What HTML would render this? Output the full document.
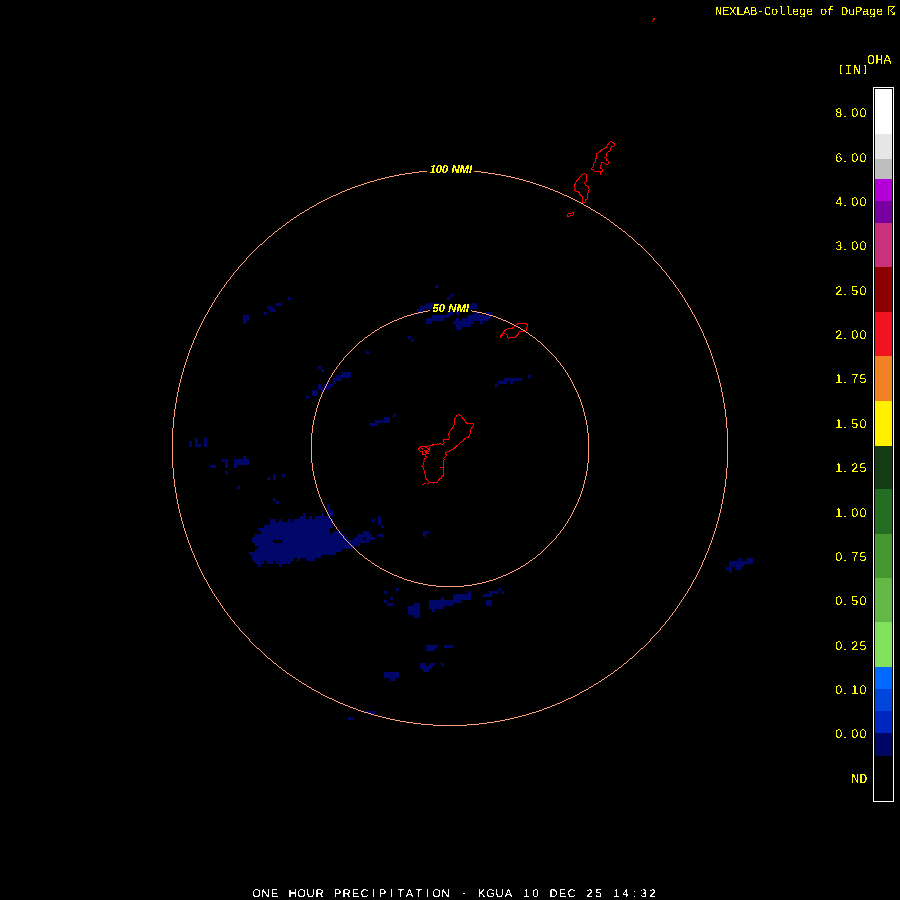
<!DOCTYPE html>
<html><head><meta charset="utf-8"><title>One Hour Precipitation - KGUA</title>
<style>
html,body{margin:0;padding:0;background:#000;}
body{width:900px;height:900px;overflow:hidden;}
svg{display:block}
text{font-family:"Liberation Mono","DejaVu Sans Mono",monospace;text-rendering:geometricPrecision;}
.y{fill:#ffff00;font-size:13.6px;stroke:#ffff00;stroke-width:0.1px;}
.n{font-family:"Liberation Sans","DejaVu Sans",sans-serif;font-size:12.6px;}
.ns{font-family:"Liberation Sans","DejaVu Sans",sans-serif;font-size:11.7px;}
.b{font-family:"Liberation Sans","DejaVu Sans",sans-serif;font-size:11.2px;}
.m{font-family:"Liberation Mono","DejaVu Sans Mono",monospace;font-size:12.1px;}
.ring{font-family:"Liberation Sans","DejaVu Sans",sans-serif;font-weight:bold;font-style:italic;font-size:11.3px;fill:#ffff00;}
</style></head><body>
<svg width="900" height="900" viewBox="0 0 900 900">
<defs><filter id="px" x="0" y="0" width="100%" height="100%" filterUnits="userSpaceOnUse" color-interpolation-filters="sRGB"><feComponentTransfer><feFuncA type="discrete" tableValues="0 0 0 0 0 0 0 0 0 0 0 0 1 1 1 1 1 1 1 1"/></feComponentTransfer></filter><filter id="px3" x="0" y="0" width="100%" height="100%" filterUnits="userSpaceOnUse" color-interpolation-filters="sRGB"><feComponentTransfer><feFuncA type="discrete" tableValues="0 0 0 0 0 0 0 0 0 1 1 1 1 1 1 1 1 1 1 1"/></feComponentTransfer></filter><filter id="px2" x="0" y="0" width="100%" height="100%" filterUnits="userSpaceOnUse" color-interpolation-filters="sRGB"><feComponentTransfer><feFuncA type="discrete" tableValues="0 0 0 0 0 0 0 0 0 0 0 1 1 1 1 1 1 1 1 1"/></feComponentTransfer></filter></defs>
<rect width="900" height="900" fill="#000"/>
<path d="M435 285h3v3h-3zM450 294h3v3h-3zM288 297h3v3h-3zM447 297h3v3h-3zM276 303h6v3h-6zM426 303h15v3h-15zM471 303h6v3h-6zM267 306h6v3h-6zM420 306h12v3h-12zM468 306h9v3h-9zM270 309h6v3h-6zM417 309h6v3h-6zM264 312h3v3h-3zM417 312h3v3h-3zM447 312h6v3h-6zM456 312h3v3h-3zM474 312h6v3h-6zM486 312h6v3h-6zM243 315h6v3h-6zM432 315h18v3h-18zM468 315h24v3h-24zM243 318h6v3h-6zM426 318h18v3h-18zM456 318h3v3h-3zM462 318h27v3h-27zM243 321h3v3h-3zM426 321h6v3h-6zM453 321h21v3h-21zM480 321h3v3h-3zM456 324h15v3h-15zM456 327h6v3h-6zM408 336h3v3h-3zM411 339h3v3h-3zM366 351h3v3h-3zM318 366h3v3h-3zM321 369h3v3h-3zM342 372h9v3h-9zM336 375h15v3h-15zM528 375h3v3h-3zM333 378h9v3h-9zM504 378h18v3h-18zM327 381h3v3h-3zM333 381h3v3h-3zM498 381h9v3h-9zM510 381h3v3h-3zM318 384h3v3h-3zM324 384h9v3h-9zM495 384h3v3h-3zM318 387h12v3h-12zM312 390h6v3h-6zM321 390h3v3h-3zM312 393h6v3h-6zM306 396h3v3h-3zM393 414h3v3h-3zM384 417h6v3h-6zM375 420h15v3h-15zM369 423h9v3h-9zM195 438h3v3h-3zM204 438h3v3h-3zM189 441h3v3h-3zM195 441h3v3h-3zM204 441h3v3h-3zM189 444h3v3h-3zM195 444h6v3h-6zM204 444h3v3h-3zM243 456h3v3h-3zM222 459h6v3h-6zM234 459h15v3h-15zM225 462h3v3h-3zM234 462h15v3h-15zM210 465h6v3h-6zM225 465h3v3h-3zM234 465h3v3h-3zM225 471h3v3h-3zM273 474h3v3h-3zM282 474h3v3h-3zM267 477h3v3h-3zM273 477h3v3h-3zM237 486h3v3h-3zM273 498h3v3h-3zM276 501h3v3h-3zM327 504h3v3h-3zM327 507h3v3h-3zM327 510h6v3h-6zM303 513h3v3h-3zM321 513h3v3h-3zM327 513h6v3h-6zM300 516h6v3h-6zM309 516h3v3h-3zM315 516h15v3h-15zM378 516h3v3h-3zM270 519h6v3h-6zM279 519h3v3h-3zM288 519h3v3h-3zM294 519h39v3h-39zM372 519h3v3h-3zM378 519h3v3h-3zM270 522h63v3h-63zM378 522h3v3h-3zM264 525h69v3h-69zM381 525h3v3h-3zM258 528h72v3h-72zM261 531h69v3h-69zM333 531h9v3h-9zM363 531h6v3h-6zM423 531h6v3h-6zM255 534h90v3h-90zM357 534h15v3h-15zM378 534h6v3h-6zM423 534h3v3h-3zM252 537h96v3h-96zM354 537h9v3h-9zM366 537h9v3h-9zM252 540h21v3h-21zM282 540h87v3h-87zM255 543h105v3h-105zM258 546h96v3h-96zM255 549h87v3h-87zM249 552h87v3h-87zM252 555h69v3h-69zM252 558h42v3h-42zM297 558h3v3h-3zM306 558h9v3h-9zM738 558h3v3h-3zM747 558h6v3h-6zM255 561h9v3h-9zM267 561h6v3h-6zM276 561h15v3h-15zM729 561h24v3h-24zM258 564h3v3h-3zM279 564h3v3h-3zM729 564h15v3h-15zM726 567h6v3h-6zM735 567h6v3h-6zM729 570h3v3h-3zM396 588h3v3h-3zM498 588h3v3h-3zM384 591h3v3h-3zM468 591h3v3h-3zM489 591h9v3h-9zM501 591h3v3h-3zM453 594h18v3h-18zM483 594h9v3h-9zM390 597h3v3h-3zM441 597h3v3h-3zM453 597h18v3h-18zM384 600h3v3h-3zM429 600h33v3h-33zM486 600h6v3h-6zM387 603h6v3h-6zM414 603h6v3h-6zM429 603h24v3h-24zM486 603h6v3h-6zM408 606h12v3h-12zM429 606h15v3h-15zM408 609h12v3h-12zM432 609h3v3h-3zM408 612h12v3h-12zM414 615h6v3h-6zM426 645h12v3h-12zM444 645h9v3h-9zM426 648h9v3h-9zM420 663h6v3h-6zM429 663h6v3h-6zM441 663h3v3h-3zM420 666h12v3h-12zM423 669h6v3h-6zM384 672h15v3h-15zM384 675h15v3h-15zM390 678h6v3h-6zM366 711h9v3h-9zM348 717h6v3h-6z" fill="#000768" shape-rendering="crispEdges"/>
<path d="M418.2 449.4L421.1 446.3L428.7 446.3L429.6 445.4L432.2 445.4L433.1 444.4L436.7 444.4L437.6 443.4L438.4 444.4L440.2 443.4L441.1 444.4L442.9 444.4L444.7 442.5L443.3 441.4L443.3 439.3L448.5 439.3L449.4 437.1L448.5 434.9L449.4 432.4L450.4 430.5L452.6 428.0L453.6 425.1L454.6 424.6L454.6 419.2L455.6 417.3L456.8 415.6L458.7 414.4L460.4 415.6L462.4 417.3L462.7 418.5L464.4 419.7L465.6 422.2L467.3 423.5L473.7 423.5L473.7 425.4L472.4 427.1L470.5 429.3L470.5 433.4L469.3 435.4L468.3 437.3L464.4 438.6L463.4 440.8L460.4 442.5L458.5 444.4L455.6 446.9L453.1 449.3L450.2 450.5L449.2 451.5L446.0 452.3L445.3 453.7L446.4 454.6L445.6 456.8L443.3 458.6L444.4 459.4L443.5 460.3L443.5 474.9L441.6 476.7L441.6 478.4L439.6 478.7L438.4 480.2L437.6 481.6L437.6 482.4L430.2 482.4L428.4 481.6L427.3 479.8L425.6 478.4L425.6 474.4L424.4 473.1L424.4 470.2L423.5 469.3L423.5 467.6L422.0 466.4L423.5 464.7L423.3 462.6L424.4 461.4L423.3 460.6L425.1 458.6L426.7 457.4L425.6 456.3L425.1 454.6L423.3 454.6L422.4 453.7L422.4 451.7L420.4 451.7ZM421.5 447.8L423.5 450.5M425.0 447.0L428.0 448.5L429.5 450.5L429.5 446.5M427.3 450.2L428.6 451.5L427.3 452.8L426.0 451.5L427.3 450.2M424.5 450.0L426.0 453.0L428.0 453.8L429.3 452.5M440.0 467.5L443.5 467.5M433.6 482.4L433.6 483.8M422.0 484.6L423.8 484.6M424.2 483.6L425.8 483.6M427.1 483.6L429.1 483.6M500.4 337.6L500.4 335.6L501.4 334.4L503.4 333.2L503.4 332.0L505.4 330.0L507.4 328.5L511.4 328.5L513.6 327.4L514.6 326.4L516.4 324.4L519.2 323.4L524.8 323.4L527.6 324.4L527.6 326.4L526.6 327.4L526.6 330.4L525.6 331.4L519.4 331.4L518.4 332.4L518.4 334.4L516.4 335.6L515.6 337.4L509.8 337.4L508.8 338.4L507.6 337.4L507.6 335.4L506.4 334.4L505.4 333.4L503.4 333.2L502.0 335.6L500.4 337.6ZM610.9 141.3L612.9 142.4L613.9 143.3L614.9 145.0L613.9 146.4L611.7 146.5L610.7 148.5L610.7 150.4L608.7 151.6L607.5 152.4L606.5 153.8L606.5 156.5L605.3 157.5L606.5 158.2L606.5 160.0L608.5 161.2L608.5 163.4L607.0 164.6L605.3 164.6L603.8 162.7L601.6 162.7L601.4 164.9L600.4 165.8L600.4 168.0L602.4 169.3L602.4 171.2L601.2 172.4L600.4 174.6L600.2 171.7L594.3 171.5L593.3 169.7L591.1 169.5L592.4 167.3L593.3 166.6L593.3 163.4L595.3 161.7L595.3 159.0L596.5 158.2L596.5 153.6L598.0 152.9L600.2 151.2L601.9 149.4L604.1 148.5L606.3 147.2L607.8 144.6L609.7 142.4ZM584.5 173.5L586.3 174.9L586.5 180.9L584.5 182.4L585.4 185.4L588.1 186.6L588.7 188.7L589.6 189.5L588.4 191.1L588.4 192.6L587.5 193.5L587.5 198.6L585.7 199.5L585.1 202.2L583.0 202.7L582.4 202.8L582.7 197.4L581.2 195.9L580.0 194.7L579.4 192.9L577.9 191.4L575.5 191.4L574.3 190.5L575.5 189.0L574.3 186.0L575.5 183.6L576.4 181.2L578.5 178.8L580.3 177.0L581.8 174.9L583.6 173.5ZM567.4 214.5L569.2 213.6L571.9 213.3L572.8 212.3L573.9 212.7L573.7 214.8L572.2 215.7L569.8 216.0L569.2 216.6L567.4 216.6Z" fill="none" stroke="#ff0000" stroke-width="1" shape-rendering="crispEdges"/>
<path d="M653 18h2v2h-2zM653 20h1v1h-1zM652 21h1v1h-1z" fill="#ff0000" shape-rendering="crispEdges"/>
<path d="M323 200h2v1h-2zM575 200h2v1h-2zM329 698h3v1h-3zM568 698h3v1h-3zM321 694h2v1h-2zM577 694h2v1h-2zM433 725h34v1h-34zM323 695h2v1h-2zM575 695h2v1h-2zM287 673h2v1h-2zM611 673h2v1h-2zM307 686h2v1h-2zM591 686h2v1h-2zM353 708h3v1h-3zM544 708h3v1h-3zM358 710h3v1h-3zM539 710h3v1h-3zM368 713h3v1h-3zM529 713h3v1h-3zM275 231h2v1h-2zM623 231h2v1h-2zM389 176h5v1h-5zM506 176h5v1h-5zM378 716h4v1h-4zM518 716h4v1h-4zM413 723h8v1h-8zM479 723h8v1h-8zM327 198h2v1h-2zM571 198h2v1h-2zM283 670h2v1h-2zM615 670h2v1h-2zM421 724h12v1h-12zM467 724h12v1h-12zM307 209h2v1h-2zM591 209h2v1h-2zM299 681h2v1h-2zM599 681h2v1h-2zM364 183h3v1h-3zM533 183h3v1h-3zM364 712h4v1h-4zM532 712h4v1h-4zM400 721h6v1h-6zM494 721h6v1h-6zM345 190h2v1h-2zM553 190h2v1h-2zM291 219h2v1h-2zM607 219h2v1h-2zM395 720h5v1h-5zM500 720h5v1h-5zM316 691h2v1h-2zM582 691h2v1h-2zM390 719h5v1h-5zM505 719h5v1h-5zM412 172h7v1h-7zM481 172h7v1h-7zM399 174h6v1h-6zM495 174h6v1h-6zM371 714h3v1h-3zM526 714h3v1h-3zM260 244h2v1h-2zM638 244h2v1h-2zM385 177h4v1h-4zM511 177h4v1h-4zM310 207h2v1h-2zM588 207h2v1h-2zM290 675h2v1h-2zM608 675h2v1h-2zM343 704h2v1h-2zM555 704h2v1h-2zM334 700h2v1h-2zM564 700h2v1h-2zM318 692h2v1h-2zM580 692h2v1h-2zM374 180h3v1h-3zM523 180h3v1h-3zM348 706h2v1h-2zM550 706h2v1h-2zM325 199h2v1h-2zM573 199h2v1h-2zM333 195h3v1h-3zM564 195h3v1h-3zM312 689h2v1h-2zM586 689h2v1h-2zM394 175h5v1h-5zM501 175h5v1h-5zM340 192h2v1h-2zM558 192h2v1h-2zM314 205h2v1h-2zM584 205h2v1h-2zM274 663h2v1h-2zM624 663h2v1h-2zM419 171h8v1h-8zM474 171h7v1h-7zM309 687h2v1h-2zM589 687h2v1h-2zM331 196h2v1h-2zM567 196h2v1h-2zM356 709h2v1h-2zM542 709h2v1h-2zM325 696h2v1h-2zM573 696h2v1h-2zM283 225h2v1h-2zM615 225h2v1h-2zM367 182h3v1h-3zM530 182h3v1h-3zM355 186h3v1h-3zM542 186h3v1h-3zM300 213h2v1h-2zM598 213h2v1h-2zM296 679h2v1h-2zM602 679h2v1h-2zM332 699h2v1h-2zM566 699h2v1h-2zM268 658h2v1h-2zM630 658h2v1h-2zM312 206h2v1h-2zM586 206h2v1h-2zM381 178h4v1h-4zM515 178h4v1h-4zM297 215h2v1h-2zM601 215h2v1h-2zM293 677h2v1h-2zM605 677h2v1h-2zM377 179h4v1h-4zM519 179h4v1h-4zM345 705h3v1h-3zM552 705h3v1h-3zM370 181h4v1h-4zM526 181h4v1h-4zM405 173h7v1h-7zM488 173h7v1h-7zM406 722h7v1h-7zM487 722h7v1h-7zM352 187h3v1h-3zM545 187h3v1h-3zM321 201h2v1h-2zM577 201h2v1h-2zM314 690h2v1h-2zM584 690h2v1h-2zM305 210h2v1h-2zM593 210h2v1h-2zM350 707h3v1h-3zM547 707h3v1h-3zM319 202h2v1h-2zM579 202h2v1h-2zM342 191h3v1h-3zM555 191h3v1h-3zM382 717h4v1h-4zM514 717h4v1h-4zM361 711h3v1h-3zM536 711h3v1h-3zM386 718h4v1h-4zM510 718h4v1h-4zM287 222h2v1h-2zM611 222h2v1h-2zM279 667h2v1h-2zM619 667h2v1h-2zM361 184h3v1h-3zM536 184h3v1h-3zM327 697h2v1h-2zM571 697h2v1h-2zM329 197h2v1h-2zM569 197h2v1h-2zM338 193h2v1h-2zM560 193h2v1h-2zM336 194h2v1h-2zM562 194h2v1h-2zM279 228h2v1h-2zM619 228h2v1h-2zM336 701h2v1h-2zM562 701h2v1h-2zM340 703h3v1h-3zM557 703h3v1h-3zM302 683h2v1h-2zM596 683h2v1h-2zM304 684h2v1h-2zM594 684h2v1h-2zM347 189h3v1h-3zM550 189h3v1h-3zM257 648h2v1h-2zM641 648h2v1h-2zM294 217h2v1h-2zM604 217h2v1h-2zM374 715h4v1h-4zM522 715h4v1h-4zM358 185h3v1h-3zM539 185h3v1h-3zM338 702h2v1h-2zM560 702h2v1h-2zM350 188h2v1h-2zM548 188h2v1h-2zM317 203h2v1h-2zM581 203h2v1h-2zM302 212h2v1h-2zM596 212h2v1h-2zM269 236h2v1h-2zM629 236h2v1h-2zM203 319v2h1v-2zM203 575v2h1v-2zM646 251v1h1v-1zM646 644v1h1v-1zM647 252v1h1v-1zM647 643v1h1v-1zM200 325v2h1v-2zM200 569v2h1v-2zM690 308v2h1v-2zM690 586v2h1v-2zM173 417v11h1v-11zM173 468v11h1v-11zM262 243v1h1v-1zM262 652v1h1v-1zM235 271v1h1v-1zM235 624v1h1v-1zM190 348v2h1v-2zM190 545v3h1v-3zM232 275v1h1v-1zM232 620v1h1v-1zM183 368v4h1v-4zM183 524v4h1v-4zM222 288v1h1v-1zM222 606v2h1v-2zM698 323v2h1v-2zM698 571v2h1v-2zM176 397v6h1v-6zM176 493v6h1v-6zM722 392v5h1v-5zM722 499v5h1v-5zM725 409v8h1v-8zM725 479v8h1v-8zM233 273v2h1v-2zM233 621v1h1v-1zM677 288v1h1v-1zM677 606v2h1v-2zM636 242v1h1v-1zM636 653v1h1v-1zM708 345v3h1v-3zM708 548v3h1v-3zM179 383v4h1v-4zM179 509v4h1v-4zM723 397v6h1v-6zM723 493v6h1v-6zM255 249v1h1v-1zM255 646v1h1v-1zM665 272v1h1v-1zM665 622v2h1v-2zM727 428v40h1v-40zM207 312v2h1v-2zM207 582v2h1v-2zM672 281v1h1v-1zM672 613v2h1v-2zM172 428v40h1v-40zM186 359v3h1v-3zM186 534v3h1v-3zM653 258v2h1v-2zM653 636v1h1v-1zM174 409v8h1v-8zM174 479v8h1v-8zM188 353v3h1v-3zM188 540v3h1v-3zM178 387v5h1v-5zM178 504v5h1v-5zM175 403v6h1v-6zM175 487v6h1v-6zM704 336v2h1v-2zM704 558v2h1v-2zM706 340v3h1v-3zM706 553v2h1v-2zM718 375v4h1v-4zM718 517v4h1v-4zM290 220v1h1v-1zM660 266v1h1v-1zM660 628v2h1v-2zM610 221v1h1v-1zM610 674v1h1v-1zM311 688v1h1v-1zM243 262v1h1v-1zM243 633v1h1v-1zM650 255v1h1v-1zM650 639v2h1v-2zM609 220v1h1v-1zM217 295v2h1v-2zM217 599v1h1v-1zM198 329v2h1v-2zM198 565v2h1v-2zM701 329v2h1v-2zM701 565v2h1v-2zM634 240v1h1v-1zM634 655v1h1v-1zM306 685v1h1v-1zM187 356v3h1v-3zM187 537v3h1v-3zM250 254v1h1v-1zM250 641v1h1v-1zM199 327v2h1v-2zM199 567v2h1v-2zM705 338v2h1v-2zM705 555v3h1v-3zM717 372v3h1v-3zM717 521v3h1v-3zM635 241v1h1v-1zM635 654v1h1v-1zM223 287v1h1v-1zM223 608v1h1v-1zM675 285v2h1v-2zM675 609v2h1v-2zM251 253v1h1v-1zM251 642v1h1v-1zM724 403v6h1v-6zM724 487v6h1v-6zM638 651v1h1v-1zM195 336v2h1v-2zM195 558v2h1v-2zM662 269v1h1v-1zM662 626v1h1v-1zM236 270v1h1v-1zM236 625v1h1v-1zM210 307v1h1v-1zM210 588v1h1v-1zM726 417v11h1v-11zM726 468v11h1v-11zM703 333v3h1v-3zM703 560v2h1v-2zM177 392v5h1v-5zM177 499v5h1v-5zM614 224v1h1v-1zM614 671v1h1v-1zM721 387v5h1v-5zM721 504v5h1v-5zM192 343v2h1v-2zM192 551v2h1v-2zM657 263v1h1v-1zM657 632v1h1v-1zM629 659v1h1v-1zM221 289v2h1v-2zM221 605v1h1v-1zM618 227v1h1v-1zM618 668v1h1v-1zM224 285v2h1v-2zM224 609v2h1v-2zM214 300v2h1v-2zM214 594v2h1v-2zM238 267v2h1v-2zM238 627v1h1v-1zM206 314v1h1v-1zM206 580v2h1v-2zM710 350v3h1v-3zM710 543v2h1v-2zM622 230v1h1v-1zM622 665v1h1v-1zM225 284v1h1v-1zM225 611v1h1v-1zM316 204v1h1v-1zM273 233v1h1v-1zM273 662v1h1v-1zM607 676v1h1v-1zM673 282v2h1v-2zM673 612v1h1v-1zM298 680v1h1v-1zM674 284v1h1v-1zM674 611v1h1v-1zM277 230v1h1v-1zM277 665v1h1v-1zM266 239v1h1v-1zM266 656v1h1v-1zM680 292v2h1v-2zM680 602v1h1v-1zM181 375v4h1v-4zM181 517v4h1v-4zM281 227v1h1v-1zM281 668v1h1v-1zM714 362v3h1v-3zM714 531v3h1v-3zM202 321v2h1v-2zM202 573v2h1v-2zM649 254v1h1v-1zM649 641v1h1v-1zM641 246v1h1v-1zM185 362v3h1v-3zM185 531v3h1v-3zM697 321v2h1v-2zM697 573v2h1v-2zM600 214v1h1v-1zM663 270v1h1v-1zM663 625v1h1v-1zM633 239v1h1v-1zM633 656v1h1v-1zM219 292v2h1v-2zM219 602v1h1v-1zM713 359v3h1v-3zM713 534v3h1v-3zM720 383v4h1v-4zM720 509v4h1v-4zM700 327v2h1v-2zM700 567v2h1v-2zM191 345v3h1v-3zM191 548v3h1v-3zM189 350v3h1v-3zM189 543v2h1v-2zM220 291v1h1v-1zM220 603v2h1v-2zM184 365v3h1v-3zM184 528v3h1v-3zM664 271v1h1v-1zM664 624v1h1v-1zM626 233v1h1v-1zM626 662v1h1v-1zM226 282v2h1v-2zM226 612v1h1v-1zM229 279v1h1v-1zM229 616v1h1v-1zM648 253v1h1v-1zM648 642v1h1v-1zM304 211v1h1v-1zM194 338v2h1v-2zM194 555v3h1v-3zM296 216v1h1v-1zM678 289v2h1v-2zM678 605v1h1v-1zM242 263v1h1v-1zM242 632v1h1v-1zM712 356v3h1v-3zM712 537v3h1v-3zM707 343v2h1v-2zM707 551v2h1v-2zM197 331v2h1v-2zM197 562v3h1v-3zM285 224v1h1v-1zM285 671v1h1v-1zM656 262v1h1v-1zM656 633v1h1v-1zM237 269v1h1v-1zM237 626v1h1v-1zM257 247v1h1v-1zM640 245v1h1v-1zM640 649v1h1v-1zM699 325v2h1v-2zM699 569v2h1v-2zM676 287v1h1v-1zM676 608v1h1v-1zM264 241v1h1v-1zM264 654v1h1v-1zM679 291v1h1v-1zM679 603v2h1v-2zM227 281v1h1v-1zM227 613v2h1v-2zM644 249v1h1v-1zM644 646v1h1v-1zM201 323v2h1v-2zM201 571v2h1v-2zM579 693v1h1v-1zM655 261v1h1v-1zM655 634v1h1v-1zM719 379v4h1v-4zM719 513v4h1v-4zM716 368v4h1v-4zM716 524v4h1v-4zM637 243v1h1v-1zM637 652v1h1v-1zM234 272v1h1v-1zM234 622v2h1v-2zM683 297v1h1v-1zM683 597v2h1v-2zM253 251v1h1v-1zM253 644v1h1v-1zM652 257v1h1v-1zM652 637v1h1v-1zM193 340v3h1v-3zM193 553v2h1v-2zM601 680v1h1v-1zM180 379v4h1v-4zM180 513v4h1v-4zM711 353v3h1v-3zM711 540v3h1v-3zM613 223v1h1v-1zM613 672v1h1v-1zM702 331v2h1v-2zM702 562v3h1v-3zM213 302v1h1v-1zM213 593v1h1v-1zM715 365v3h1v-3zM715 528v3h1v-3zM205 315v2h1v-2zM205 579v1h1v-1zM320 693v1h1v-1zM268 237v1h1v-1zM263 242v1h1v-1zM263 653v1h1v-1zM666 273v2h1v-2zM666 621v1h1v-1zM196 333v3h1v-3zM196 560v2h1v-2zM252 252v1h1v-1zM252 643v1h1v-1zM286 223v1h1v-1zM286 672v1h1v-1zM667 275v1h1v-1zM667 620v1h1v-1zM209 308v2h1v-2zM209 586v2h1v-2zM709 348v2h1v-2zM709 545v3h1v-3zM625 232v1h1v-1zM593 685v1h1v-1zM659 265v1h1v-1zM659 630v1h1v-1zM628 235v1h1v-1zM628 660v1h1v-1zM617 226v1h1v-1zM617 669v1h1v-1zM244 261v1h1v-1zM244 634v1h1v-1zM632 238v1h1v-1zM632 657v1h1v-1zM245 260v1h1v-1zM245 635v1h1v-1zM670 279v1h1v-1zM670 616v1h1v-1zM682 295v2h1v-2zM682 599v1h1v-1zM695 317v2h1v-2zM695 577v2h1v-2zM688 305v2h1v-2zM688 589v2h1v-2zM691 310v2h1v-2zM691 584v2h1v-2zM606 218v1h1v-1zM256 248v1h1v-1zM256 647v1h1v-1zM270 659v1h1v-1zM271 235v1h1v-1zM271 660v1h1v-1zM216 297v1h1v-1zM216 597v2h1v-2zM658 264v1h1v-1zM658 631v1h1v-1zM212 303v2h1v-2zM212 591v2h1v-2zM228 280v1h1v-1zM228 615v1h1v-1zM208 310v2h1v-2zM208 584v2h1v-2zM654 260v1h1v-1zM654 635v1h1v-1zM621 229v1h1v-1zM621 666v1h1v-1zM669 277v2h1v-2zM669 617v2h1v-2zM693 314v1h1v-1zM693 580v2h1v-2zM182 372v3h1v-3zM182 521v3h1v-3zM230 277v2h1v-2zM230 617v2h1v-2zM694 315v2h1v-2zM694 579v1h1v-1zM259 245v1h1v-1zM259 649v1h1v-1zM204 317v2h1v-2zM204 577v2h1v-2zM687 303v2h1v-2zM687 591v2h1v-2zM239 266v1h1v-1zM239 628v2h1v-2zM689 307v1h1v-1zM689 588v1h1v-1zM642 247v1h1v-1zM231 276v1h1v-1zM231 619v1h1v-1zM643 248v1h1v-1zM643 647v1h1v-1zM247 257v1h1v-1zM247 637v1h1v-1zM211 305v2h1v-2zM211 589v2h1v-2zM685 300v2h1v-2zM685 594v2h1v-2zM295 678v1h1v-1zM265 240v1h1v-1zM265 655v1h1v-1zM623 664v1h1v-1zM289 221v1h1v-1zM289 674v1h1v-1zM686 302v1h1v-1zM686 593v1h1v-1zM215 298v2h1v-2zM215 596v1h1v-1zM240 265v1h1v-1zM240 630v1h1v-1zM293 218v1h1v-1zM274 232v1h1v-1zM631 237v1h1v-1zM254 250v1h1v-1zM254 645v1h1v-1zM590 208v1h1v-1zM218 294v1h1v-1zM218 600v2h1v-2zM696 319v2h1v-2zM696 575v2h1v-2zM668 276v1h1v-1zM668 619v1h1v-1zM661 267v2h1v-2zM661 627v1h1v-1zM246 258v2h1v-2zM246 636v1h1v-1zM309 208v1h1v-1zM692 312v2h1v-2zM692 582v2h1v-2zM627 234v1h1v-1zM627 661v1h1v-1zM278 229v1h1v-1zM278 666v1h1v-1zM681 294v1h1v-1zM681 600v2h1v-2zM276 664v1h1v-1zM258 246v1h1v-1zM249 255v1h1v-1zM249 639v2h1v-2zM598 682v1h1v-1zM260 650v1h1v-1zM272 234v1h1v-1zM272 661v1h1v-1zM645 250v1h1v-1zM645 645v1h1v-1zM684 298v2h1v-2zM684 596v1h1v-1zM261 651v1h1v-1zM241 264v1h1v-1zM241 631v1h1v-1zM603 216v1h1v-1zM671 280v1h1v-1zM671 615v1h1v-1zM282 226v1h1v-1zM282 669v1h1v-1zM299 214v1h1v-1zM651 256v1h1v-1zM651 638v1h1v-1zM267 238v1h1v-1zM267 657v1h1v-1zM639 650v1h1v-1zM301 682v1h1v-1zM248 256v1h1v-1zM248 638v1h1v-1zM604 678v1h1v-1zM595 211v1h1v-1zM588 688v1h1v-1zM292 676v1h1v-1zM583 204v1h1v-1z" fill="#ffa078" shape-rendering="crispEdges"/>
<path d="M418 583h5v1h-5zM477 583h5v1h-5zM397 576h2v1h-2zM501 576h2v1h-2zM384 325h2v1h-2zM514 325h2v1h-2zM392 321h2v1h-2zM506 321h2v1h-2zM392 574h2v1h-2zM506 574h2v1h-2zM411 314h3v1h-3zM486 314h3v1h-3zM382 326h2v1h-2zM516 326h2v1h-2zM390 322h2v1h-2zM508 322h2v1h-2zM399 318h3v1h-3zM498 318h3v1h-3zM377 566h2v1h-2zM521 566h2v1h-2zM436 586h28v1h-28zM418 312h5v1h-5zM477 312h5v1h-5zM397 319h2v1h-2zM501 319h2v1h-2zM399 577h3v1h-3zM498 577h3v1h-3zM404 579h3v1h-3zM493 579h3v1h-3zM390 573h2v1h-2zM508 573h2v1h-2zM407 315h4v1h-4zM489 315h4v1h-4zM365 337h2v1h-2zM533 337h2v1h-2zM375 565h2v1h-2zM523 565h2v1h-2zM365 558h2v1h-2zM533 558h2v1h-2zM423 584h5v1h-5zM472 584h5v1h-5zM407 580h4v1h-4zM489 580h4v1h-4zM372 563h2v1h-2zM526 563h2v1h-2zM380 568h2v1h-2zM518 568h2v1h-2zM368 560h2v1h-2zM530 560h2v1h-2zM428 585h8v1h-8zM464 585h8v1h-8zM411 581h3v1h-3zM486 581h3v1h-3zM414 582h4v1h-4zM482 582h4v1h-4zM384 570h2v1h-2zM514 570h2v1h-2zM423 311h5v1h-5zM472 311h5v1h-5zM404 316h3v1h-3zM493 316h3v1h-3zM360 554h2v1h-2zM538 554h2v1h-2zM375 330h2v1h-2zM523 330h2v1h-2zM360 341h2v1h-2zM538 341h2v1h-2zM388 323h2v1h-2zM510 323h2v1h-2zM414 313h4v1h-4zM482 313h4v1h-4zM368 335h2v1h-2zM530 335h2v1h-2zM394 320h3v1h-3zM503 320h3v1h-3zM388 572h2v1h-2zM510 572h2v1h-2zM380 327h2v1h-2zM518 327h2v1h-2zM372 332h2v1h-2zM526 332h2v1h-2zM377 329h2v1h-2zM521 329h2v1h-2zM428 310h2v1h-2zM402 578h2v1h-2zM496 578h2v1h-2zM394 575h3v1h-3zM503 575h3v1h-3zM402 317h2v1h-2zM496 317h2v1h-2zM382 569h2v1h-2zM516 569h2v1h-2zM386 571h2v1h-2zM512 571h2v1h-2zM386 324h2v1h-2zM512 324h2v1h-2zM311 433v30h1v-30zM370 334v1h1v-1zM370 561v1h1v-1zM587 425v8h1v-8zM587 463v8h1v-8zM583 408v4h1v-4zM583 484v4h1v-4zM313 420v5h1v-5zM313 471v5h1v-5zM334 370v2h1v-2zM334 524v2h1v-2zM339 363v2h1v-2zM339 531v2h1v-2zM374 331v1h1v-1zM374 564v1h1v-1zM588 433v30h1v-30zM323 390v2h1v-2zM323 504v2h1v-2zM584 412v4h1v-4zM584 480v4h1v-4zM316 408v4h1v-4zM316 484v4h1v-4zM359 342v1h1v-1zM359 553v1h1v-1zM338 365v1h1v-1zM338 530v1h1v-1zM326 384v2h1v-2zM326 510v2h1v-2zM570 378v2h1v-2zM570 516v2h1v-2zM312 425v8h1v-8zM312 463v8h1v-8zM379 328v1h1v-1zM379 567v1h1v-1zM582 405v3h1v-3zM582 488v3h1v-3zM314 416v4h1v-4zM314 476v4h1v-4zM350 351v1h1v-1zM350 544v1h1v-1zM577 392v2h1v-2zM577 502v2h1v-2zM550 352v1h1v-1zM550 543v1h1v-1zM560 363v2h1v-2zM560 531v2h1v-2zM574 386v2h1v-2zM574 508v2h1v-2zM586 420v5h1v-5zM586 471v5h1v-5zM322 392v2h1v-2zM322 502v2h1v-2zM566 372v1h1v-1zM566 523v1h1v-1zM544 346v1h1v-1zM544 549v1h1v-1zM337 366v1h1v-1zM337 529v1h1v-1zM580 399v3h1v-3zM580 494v3h1v-3zM357 344v1h1v-1zM357 551v1h1v-1zM578 394v3h1v-3zM578 499v3h1v-3zM348 353v1h1v-1zM348 542v1h1v-1zM558 361v1h1v-1zM558 534v1h1v-1zM347 354v1h1v-1zM347 541v1h1v-1zM559 362v1h1v-1zM559 533v1h1v-1zM318 402v3h1v-3zM318 491v3h1v-3zM330 377v1h1v-1zM330 518v1h1v-1zM342 360v1h1v-1zM342 535v1h1v-1zM345 356v1h1v-1zM345 539v1h1v-1zM545 347v1h1v-1zM545 548v1h1v-1zM356 345v1h1v-1zM356 550v1h1v-1zM340 362v1h1v-1zM340 533v1h1v-1zM585 416v4h1v-4zM585 476v4h1v-4zM528 333v1h1v-1zM528 562v1h1v-1zM317 405v3h1v-3zM317 488v3h1v-3zM341 361v1h1v-1zM341 534v1h1v-1zM551 353v1h1v-1zM551 542v1h1v-1zM573 384v2h1v-2zM573 510v2h1v-2zM529 334v1h1v-1zM529 561v1h1v-1zM315 412v4h1v-4zM315 480v4h1v-4zM565 370v2h1v-2zM565 524v2h1v-2zM543 345v1h1v-1zM543 550v1h1v-1zM354 347v1h1v-1zM354 548v1h1v-1zM581 402v3h1v-3zM581 491v3h1v-3zM557 360v1h1v-1zM557 535v1h1v-1zM325 386v2h1v-2zM325 508v2h1v-2zM569 377v1h1v-1zM569 518v1h1v-1zM352 349v1h1v-1zM352 546v1h1v-1zM552 354v1h1v-1zM552 541v1h1v-1zM355 346v1h1v-1zM355 549v1h1v-1zM333 372v1h1v-1zM333 523v1h1v-1zM321 394v3h1v-3zM321 499v3h1v-3zM576 390v2h1v-2zM576 504v2h1v-2zM520 328v1h1v-1zM520 567v1h1v-1zM329 378v2h1v-2zM329 516v2h1v-2zM540 342v1h1v-1zM540 553v1h1v-1zM561 365v1h1v-1zM561 530v1h1v-1zM471 310v1h1v-1zM525 331v1h1v-1zM525 564v1h1v-1zM336 367v2h1v-2zM336 527v2h1v-2zM575 388v2h1v-2zM575 506v2h1v-2zM349 352v1h1v-1zM349 543v1h1v-1zM324 388v2h1v-2zM324 506v2h1v-2zM563 367v2h1v-2zM563 527v2h1v-2zM343 358v2h1v-2zM343 536v2h1v-2zM319 399v3h1v-3zM319 494v3h1v-3zM332 373v2h1v-2zM332 521v2h1v-2zM572 382v2h1v-2zM572 512v2h1v-2zM547 349v1h1v-1zM547 546v1h1v-1zM344 357v1h1v-1zM344 538v1h1v-1zM579 397v2h1v-2zM579 497v2h1v-2zM546 348v1h1v-1zM546 547v1h1v-1zM363 339v1h1v-1zM363 556v1h1v-1zM328 380v2h1v-2zM328 514v2h1v-2zM367 336v1h1v-1zM367 559v1h1v-1zM553 355v1h1v-1zM553 540v1h1v-1zM371 333v1h1v-1zM371 562v1h1v-1zM320 397v2h1v-2zM320 497v2h1v-2zM571 380v2h1v-2zM571 514v2h1v-2zM554 356v1h1v-1zM554 539v1h1v-1zM564 369v1h1v-1zM564 526v1h1v-1zM331 375v2h1v-2zM331 519v2h1v-2zM542 344v1h1v-1zM542 551v1h1v-1zM562 366v1h1v-1zM562 529v1h1v-1zM535 338v1h1v-1zM535 557v1h1v-1zM335 369v1h1v-1zM335 526v1h1v-1zM567 373v2h1v-2zM567 521v2h1v-2zM327 382v2h1v-2zM327 512v2h1v-2zM351 350v1h1v-1zM351 545v1h1v-1zM549 351v1h1v-1zM549 544v1h1v-1zM541 343v1h1v-1zM541 552v1h1v-1zM358 343v1h1v-1zM358 552v1h1v-1zM362 340v1h1v-1zM362 555v1h1v-1zM548 350v1h1v-1zM548 545v1h1v-1zM346 355v1h1v-1zM346 540v1h1v-1zM537 340v1h1v-1zM537 555v1h1v-1zM536 339v1h1v-1zM536 556v1h1v-1zM556 358v2h1v-2zM556 536v2h1v-2zM353 348v1h1v-1zM353 547v1h1v-1zM568 375v2h1v-2zM568 519v2h1v-2zM555 357v1h1v-1zM555 538v1h1v-1zM532 336v1h1v-1zM532 559v1h1v-1zM364 338v1h1v-1zM364 557v1h1v-1z" fill="#ffa078" shape-rendering="crispEdges"/>
<g filter="url(#px3)"><text class="ring" x="450.8" y="173.0" text-anchor="middle">100 NMI</text>
<text class="ring" x="450.8" y="312.0" text-anchor="middle">50 NMI</text></g>
<g filter="url(#px)">
<g class="y">
<text font-size="12.2px" stroke-width="0.1" x="715.00 722.00 729.00 736.00 743.00 750.00 757.00 764.00 771.00 778.00 785.00 792.00 799.00 806.00 813.00 820.00 827.00 834.00 841.00 848.00 855.00 862.00 869.00 876.00" y="15">NEXLAB-College of DuPage</text>
<text transform="rotate(0.05 878 60)" x="867.1 875.2 883.3" y="63.85" stroke-width="0.12">OHA</text>
<text x="838.2 844.6 853.1 861.4" y="74"><tspan font-size="10.4px" dy="-1.9">[</tspan><tspan dy="1.9">IN</tspan><tspan font-size="10.4px" dy="-1.9">]</tspan></text>
<text class="n" x="835.2 843.3 851.3 859.4" y="117">8.00</text><text class="n" x="835.2 843.3 851.3 859.4" y="162">6.00</text><text class="n" x="835.2 843.3 851.3 859.4" y="206">4.00</text><text class="n" x="835.2 843.3 851.3 859.4" y="250">3.00</text><text class="n" x="835.2 843.3 851.3 859.4" y="295">2.50</text><text class="n" x="835.2 843.3 851.3 859.4" y="339">2.00</text><text class="n" x="835.2 843.3 851.3 859.4" y="383">1.75</text><text class="n" x="835.2 843.3 851.3 859.4" y="428">1.50</text><text class="n" x="835.2 843.3 851.3 859.4" y="472">1.25</text><text class="n" x="835.2 843.3 851.3 859.4" y="517">1.00</text><text class="n" x="835.2 843.3 851.3 859.4" y="561">0.75</text><text class="n" x="835.2 843.3 851.3 859.4" y="605">0.50</text><text class="n" x="835.2 843.3 851.3 859.4" y="650">0.25</text><text class="n" x="835.2 843.3 851.3 859.4" y="694">0.10</text><text class="n" x="835.2 843.3 851.3 859.4" y="738">0.00</text><text x="851.2 859.3" y="783">ND</text>
</g>
</g><path d="M888 6h7v1h-7zM888 7h1v1h-1zM893 7h1v1h-1zM888 8h1v1h-1zM892 8h1v1h-1zM888 9h1v1h-1zM891 9h1v1h-1zM888 10h1v1h-1zM890 10h1v1h-1zM888 11h1v1h-1zM891 11h1v1h-1zM888 12h1v1h-1zM892 12h1v1h-1zM894 12h1v1h-1zM888 13h1v1h-1zM893 13h2v1h-2zM888 14h1v1h-1zM892 14h3v1h-3z" fill="#ffff00" shape-rendering="crispEdges"/>
<rect x="873.5" y="87.5" width="20" height="714" fill="none" stroke="#fff" stroke-width="1"/>
<rect x="875" y="89" width="17" height="45" fill="#ffffff"/><rect x="875" y="134" width="17" height="25" fill="#e6e6e6"/><rect x="875" y="159" width="17" height="20" fill="#bebebe"/><rect x="875" y="179" width="17" height="22" fill="#b400d7"/><rect x="875" y="201" width="17" height="22" fill="#7800a0"/><rect x="875" y="223" width="17" height="44" fill="#c8327d"/><rect x="875" y="267" width="17" height="45" fill="#8c0000"/><rect x="875" y="312" width="17" height="44" fill="#f01423"/><rect x="875" y="356" width="17" height="45" fill="#f08223"/><rect x="875" y="401" width="17" height="45" fill="#fff000"/><rect x="875" y="446" width="17" height="43" fill="#143c14"/><rect x="875" y="489" width="17" height="45" fill="#236e23"/><rect x="875" y="534" width="17" height="44" fill="#469632"/><rect x="875" y="578" width="17" height="44" fill="#64b946"/><rect x="875" y="622" width="17" height="45" fill="#82e15a"/><rect x="875" y="667" width="17" height="22" fill="#0069ff"/><rect x="875" y="689" width="17" height="22" fill="#0046dc"/><rect x="875" y="711" width="17" height="22" fill="#0026c0"/><rect x="875" y="733" width="17" height="23" fill="#000664"/>
<g filter="url(#px2)"><text class="b" text-anchor="middle" stroke="#fff" stroke-width="0.1" x="256.60 265.60 274.60 283.60 292.60 301.60 310.60 319.60 328.60 337.60 346.60 355.60 364.60 373.60 382.60 391.60 400.60 409.60 418.60 427.60 436.60 445.60 454.60 463.60 472.60 481.60 490.60 499.60 508.60 517.60 526.60 535.60 544.60 553.60 562.60 571.60 580.60 589.60 598.60 607.60 616.60 625.60 634.60 643.60 652.60" y="897.0" fill="#fff">ONE HOUR PRECIPITATION - KGUA 10 DEC 25 14:32</text></g>
</svg>
</body></html>
